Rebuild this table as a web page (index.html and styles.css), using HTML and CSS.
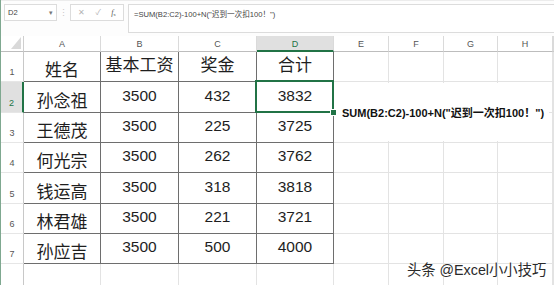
FILE: index.html
```html
<!DOCTYPE html>
<html lang="zh-CN">
<head>
<meta charset="utf-8">
<title>Excel</title>
<link rel="stylesheet" href="styles.css">
</head>
<body>
<div class="app">
  <div class="toolbar">
    <div class="namebox"><span>D2</span><span class="caret">▾</span></div>
    <div class="sep">⋮</div>
    <div class="btnbox">
      <span class="ico x">✕</span>
      <span class="ico ok">✓</span>
      <span class="ico fx"><i>f</i><sub>x</sub></span>
    </div>
    <div class="formula">=SUM(B2:C2)-100+N("迟到一次扣100！")</div>
  </div>

  <div class="sheet">
    <div class="c corner"><svg width="10" height="12" viewBox="0 0 10 12"><polygon points="10,0 10,12 0,12" fill="#d9d9d9"/></svg></div>
    <div class="c ch">A</div><div class="c ch">B</div><div class="c ch">C</div><div class="c ch selh">D</div>
    <div class="c ch">E</div><div class="c ch">F</div><div class="c ch">G</div><div class="c ch">H</div><div class="c ch"></div>

    <div class="c rh">1</div>
    <div class="c t name">姓名</div><div class="c t hd">基本工资</div><div class="c t hd">奖金</div><div class="c t hd">合计</div>
    <div class="c"></div><div class="c"></div><div class="c"></div><div class="c"></div><div class="c"></div>

    <div class="c rh selr">2</div>
    <div class="c t name">孙念祖</div><div class="c t num">3500</div><div class="c t num">432</div><div class="c t num sel">3832</div>
    <div class="c"></div><div class="c"></div><div class="c"></div><div class="c"></div><div class="c"></div>

    <div class="c rh">3</div>
    <div class="c t name">王德茂</div><div class="c t num">3500</div><div class="c t num">225</div><div class="c t num">3725</div>
    <div class="c"></div><div class="c"></div><div class="c"></div><div class="c"></div><div class="c"></div>

    <div class="c rh">4</div>
    <div class="c t name">何光宗</div><div class="c t num">3500</div><div class="c t num">262</div><div class="c t num">3762</div>
    <div class="c"></div><div class="c"></div><div class="c"></div><div class="c"></div><div class="c"></div>

    <div class="c rh">5</div>
    <div class="c t name">钱运高</div><div class="c t num">3500</div><div class="c t num">318</div><div class="c t num">3818</div>
    <div class="c"></div><div class="c"></div><div class="c"></div><div class="c"></div><div class="c"></div>

    <div class="c rh">6</div>
    <div class="c t name">林君雄</div><div class="c t num">3500</div><div class="c t num">221</div><div class="c t num">3721</div>
    <div class="c"></div><div class="c"></div><div class="c"></div><div class="c"></div><div class="c"></div>

    <div class="c rh">7</div>
    <div class="c t name">孙应吉</div><div class="c t num">3500</div><div class="c t num">500</div><div class="c t num">4000</div>
    <div class="c"></div><div class="c"></div><div class="c"></div><div class="c"></div><div class="c"></div>

    <div class="c rh"></div>
    <div class="c"></div><div class="c"></div><div class="c"></div><div class="c"></div>
    <div class="c"></div><div class="c"></div><div class="c"></div><div class="c"></div><div class="c"></div>
  </div>

  <div class="note">SUM(B2:C2)-100+N("迟到一次扣100！")</div>
  <div class="mark">头条 @Excel小小技巧</div>
</div>
</body>
</html>
```

FILE: styles.css
```css
html, body {
  margin: 0;
  padding: 0;
  background: #ffffff;
  overflow: hidden;
}
body {
  width: 554px;
  height: 285px;
  font-family: "Liberation Sans", "Noto Sans CJK SC", sans-serif;
  color: #222;
}
.app {
  position: relative;
  width: 553px;
  height: 285px;
  border-left: 1px solid #7fa890;
  overflow: hidden;
}

/* ---------- toolbar ---------- */
.toolbar {
  height: 36px;
  box-sizing: border-box;
  padding-top: 3px;
  display: flex;
  align-items: flex-start;
  border-top: 1px solid #ececec;
  background: #fdfdfd;
}
.namebox {
  margin-left: 3px;
  width: 53px;
  height: 17px;
  box-sizing: border-box;
  border: 1px solid #dcdcdc;
  background: #fff;
  display: flex;
  align-items: center;
  justify-content: space-between;
  padding: 0 3px 0 3px;
  font-size: 7.6px;
  color: #444;
}
.caret {
  font-size: 7px;
  color: #777;
}
.sep {
  width: 13px;
  height: 17px;
  display: flex;
  align-items: center;
  justify-content: center;
  font-size: 9px;
  color: #c8c8c8;
}
.btnbox {
  width: 54px;
  height: 17px;
  box-sizing: border-box;
  border: 1px solid #dcdcdc;
  background: #fff;
  display: flex;
  align-items: center;
  justify-content: space-around;
  padding: 0 2px;
}
.ico {
  font-size: 8px;
  color: #b4b4b4;
  line-height: 1;
}
.ico.fx {
  color: #555;
  font-family: "Liberation Serif", serif;
  font-size: 8px;
}
.ico.fx sub {
  font-size: 5px;
  vertical-align: -1px;
}
.formula {
  margin-left: 4px;
  flex: 1;
  height: 29px;
  margin-right: -4px;
  box-sizing: border-box;
  border: 1px solid #dcdcdc;
  background: #fff;
  padding: 3px 0 0 5px;
  font-size: 7.6px;
  color: #444;
  white-space: nowrap;
}

/* ---------- sheet ---------- */
.sheet {
  display: grid;
  grid-template-columns: 23px 77px 78px 78px 77px 55px 55px 54px 55px 1fr;
  grid-template-rows: 16px 30px 31px 30px 30px 31px 30px 30px 30px;
}
.c {
  box-sizing: border-box;
  border-right: 1px solid #e3e3e3;
  border-bottom: 1px solid #e3e3e3;
  display: flex;
  align-items: center;
  justify-content: center;
  white-space: nowrap;
  position: relative;
}
.corner {
  align-items: flex-end;
  justify-content: flex-end;
  padding: 0 2px 2px 0;
  border-right-color: #cfcfcf;
  border-bottom-color: #bdbdbd;
}
.ch {
  font-size: 9px;
  color: #555;
  padding-top: 1px;
  border-bottom-color: #bdbdbd;
  border-right-color: #dadada;
}
.ch.selh {
  background: #e0e0e0;
  color: #217346;
  border-bottom: 2px solid #217346;
}
.rh {
  font-size: 9px;
  color: #555;
  align-items: flex-end;
  padding-bottom: 4px;
  border-right-color: #c8c8c8;
  border-bottom-color: #e6e6e6;
}
.rh.selr {
  background: #e0e0e0;
  color: #217346;
  border-right: 2px solid #217346;
}
.t {
  border-right-color: #6e6e6e;
  border-bottom-color: #6e6e6e;
  color: #1e1e1e;
}
.name {
  font-size: 17px;
  align-items: flex-end;
  padding-bottom: 0;
  line-height: 1.2;
}
.hd {
  font-size: 17px;
  line-height: 1.2;
}
.num {
  font-size: 15.5px;
  padding-bottom: 3px;
}
.sel::after {
  content: "";
  position: absolute;
  top: -2px;
  left: -2px;
  right: -1px;
  bottom: -1px;
  border: 2px solid #217346;
}
.sel::before {
  content: "";
  position: absolute;
  right: -4px;
  bottom: -4px;
  width: 5px;
  height: 5px;
  background: #217346;
  border: 1px solid #fff;
  z-index: 2;
}

/* ---------- overlays ---------- */
.note {
  position: absolute;
  left: 333px;
  top: 83px;
  width: 215px;
  height: 58px;
  background: #fff;
  display: flex;
  align-items: center;
  padding-left: 8px;
  box-sizing: border-box;
  font-size: 11px;
  font-weight: bold;
  color: #111;
  white-space: nowrap;
}
.mark {
  position: absolute;
  left: 406px;
  top: 258px;
  font-size: 14.3px;
  color: #2a2a2a;
  white-space: nowrap;
  text-shadow: 0 0 2px #fff;
}
```
